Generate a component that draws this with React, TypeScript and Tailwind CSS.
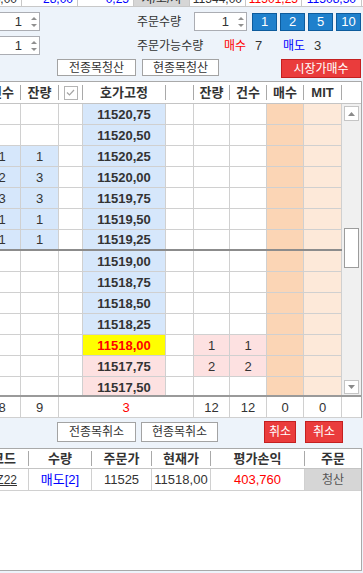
import React from "react";

type Row = {
  p: string;
  a?: string;
  b?: string;
  f?: string;
  g?: string;
  kind: "bid" | "cur" | "ask";
  thick?: boolean;
};

const rows: Row[] = [
  { p: "11520,75", kind: "bid" },
  { p: "11520,50", kind: "bid" },
  { p: "11520,25", a: "1", b: "1", kind: "bid" },
  { p: "11520,00", a: "2", b: "3", kind: "bid" },
  { p: "11519,75", a: "3", b: "3", kind: "bid" },
  { p: "11519,50", a: "1", b: "1", kind: "bid" },
  { p: "11519,25", a: "1", b: "1", kind: "bid", thick: true },
  { p: "11519,00", kind: "bid" },
  { p: "11518,75", kind: "bid" },
  { p: "11518,50", kind: "bid" },
  { p: "11518,25", kind: "bid" },
  { p: "11518,00", f: "1", g: "1", kind: "cur" },
  { p: "11517,75", f: "2", g: "2", kind: "ask" },
  { p: "11517,50", kind: "ask" },
];

function UpDown() {
  return (
    <div className="w-[11px] flex flex-col items-center justify-center gap-[4px]">
      <svg width="6" height="3" viewBox="0 0 6 3">
        <path d="M3 0L6 3H0z" fill="#909090" />
      </svg>
      <svg width="6" height="3" viewBox="0 0 6 3">
        <path d="M0 0H6L3 3z" fill="#909090" />
      </svg>
    </div>
  );
}

function Spin({ cls }: { cls: string }) {
  return (
    <div className={`${cls} shrink-0 h-[19px] bg-white border border-[#abadb3] flex items-center text-[13px]`}>
      <span className="flex-1 text-right pr-[6px] leading-none">1</span>
      <UpDown />
    </div>
  );
}

function H({ w, children }: { w: string; children?: React.ReactNode }) {
  return (
    <div className={`${w} shrink-0 h-full flex items-center`}>
      <div className="flex-1 flex justify-center font-bold text-[13px] leading-none">{children}</div>
      <div className="w-px h-[15px] bg-[#a9a9a9]" />
    </div>
  );
}

function C({ w, bg = "bg-white", children, cls = "" }: { w: string; bg?: string; children?: React.ReactNode; cls?: string }) {
  return (
    <div className={`${w} ${bg} ${cls} shrink-0 h-full border-r border-[#d0d0d0] flex items-center justify-center text-[13px] leading-none`}>
      {children}
    </div>
  );
}

function WhiteBtn({ cls, children }: { cls: string; children: React.ReactNode }) {
  return (
    <div className={`${cls} shrink-0 bg-white border border-[#a3a3a3] flex items-center justify-center text-[12px] leading-none text-[#333]`}>
      {children}
    </div>
  );
}

function RedBtn({ cls, children }: { cls: string; children: React.ReactNode }) {
  return (
    <div className={`${cls} shrink-0 bg-[#ea3c3c] border border-[#c42020] flex items-center justify-center text-[12px] leading-none text-white`}>
      {children}
    </div>
  );
}

export default function App() {
  return (
    <div className="w-[363px] h-[573px] overflow-hidden bg-[#edf3fa] text-[#333] font-['Liberation_Sans','Noto_Sans_CJK_KR',sans-serif]">
      {/* cut-off quote row */}
      <div className="flex h-[20px] -mt-[13px] -ml-[34px] bg-white border-b border-[#c8c8c8] text-[12px] leading-[14px]">
        <div className="w-[56px] shrink-0 border-r border-[#c8c8c8] flex items-end justify-end pr-[4px]">13,00</div>
        <div className="w-[56px] shrink-0 border-r border-[#c8c8c8] flex items-end justify-end pr-[4px] text-[#0000ff]">28,00</div>
        <div className="w-[56px] shrink-0 border-r border-[#c8c8c8] flex items-end justify-end pr-[4px] text-[#0000ff]">0,25</div>
        <div className="w-[56px] shrink-0 border-r border-[#c8c8c8] flex items-end justify-center bg-[#d6d6d6]">지/고/저</div>
        <div className="w-[56px] shrink-0 border-r border-[#c8c8c8] flex items-end justify-end pr-[3px]">11544,00</div>
        <div className="w-[56px] shrink-0 border-r border-[#c8c8c8] flex items-end justify-end pr-[3px] text-[#ff0000]">11501,25</div>
        <div className="w-[60px] shrink-0 border-r border-[#c8c8c8] flex items-end justify-end pr-[5px] text-[#0000ff]">11508,50</div>
      </div>

      {/* order qty */}
      <div className="flex items-center h-[21px] mt-[4px]">
        <Spin cls="w-[50px] -ml-[10px]" />
        <div className="ml-[97px] w-[57px] shrink-0 text-[12px] leading-none">주문수량</div>
        <Spin cls="w-[53px]" />
        <div className="ml-[5px] flex gap-[3px]">
          {["1", "2", "5", "10"].map((n) => (
            <div key={n} className="w-[25px] h-[18px] bg-[#1f80cc] border border-[#0d5b9c] flex items-center justify-center text-white text-[13px] leading-none">
              {n}
            </div>
          ))}
        </div>
      </div>

      {/* available qty */}
      <div className="flex items-center h-[21px] mt-[3px]">
        <Spin cls="w-[50px] -ml-[10px]" />
        <div className="ml-[97px] w-[87px] shrink-0 text-[12px] leading-none">주문가능수량</div>
        <div className="w-[31px] shrink-0 text-[12px] leading-none text-[#ff0000]">매수</div>
        <div className="w-[28px] shrink-0 text-[13px] leading-none">7</div>
        <div className="w-[31px] shrink-0 text-[12px] leading-none text-[#0000ff]">매도</div>
        <div className="text-[13px] leading-none">3</div>
      </div>

      {/* liquidation buttons */}
      <div className="flex items-start h-[19px] mt-[3px]">
        <WhiteBtn cls="ml-[57px] w-[79px] h-[17px]">전종목청산</WhiteBtn>
        <WhiteBtn cls="ml-[6px] w-[77px] h-[17px]">현종목청산</WhiteBtn>
        <RedBtn cls="ml-[62px] w-[80px] h-[19px]">시장가매수</RedBtn>
      </div>

      {/* order book grid */}
      <div className="mt-[3px] w-[362px] h-[337px] bg-white border-t border-r border-[#a9a9a9] overflow-hidden">
        <div className="-ml-[16px] w-[377px]">
          <div className="flex h-[22px] border-b border-[#c4c4c4]">
            <H w="w-[37px]">건수</H>
            <H w="w-[38px]">잔량</H>
            <H w="w-[24px]">
              <div className="w-[14px] h-[14px] border border-[#b4b4b4] bg-white flex items-center justify-center">
                <svg width="9" height="7" viewBox="0 0 9 7">
                  <path d="M1 3.5l2.5 2.5L8 1" fill="none" stroke="#a5a5a5" strokeWidth="1.2" />
                </svg>
              </div>
            </H>
            <H w="w-[83px]">호가고정</H>
            <H w="w-[28px]" />
            <H w="w-[36px]">잔량</H>
            <H w="w-[37px]">건수</H>
            <H w="w-[37px]">매수</H>
            <H w="w-[38px]">MIT</H>
          </div>

          <div className="flex h-[291px] overflow-hidden">
            <div className="w-[358px] shrink-0">
              {rows.map((r) => {
                const priceBg = r.kind === "bid" ? "bg-[#d6e7fb]" : r.kind === "cur" ? "bg-[#ffff00]" : "bg-[#fde1e1]";
                const leftBg = r.a ? "bg-[#d6e7fb]" : "bg-white";
                const rightBg = r.f ? "bg-[#fde1e1]" : "bg-white";
                return (
                  <div
                    key={r.p}
                    className={`flex h-[21px] ${r.thick ? "border-b-2 border-[#8c8c8c]" : "border-b border-[#d0d0d0]"}`}
                  >
                    <C w="w-[37px]" bg={leftBg}>{r.a}</C>
                    <C w="w-[38px]" bg={leftBg}>{r.b}</C>
                    <C w="w-[24px]" />
                    <C
                      w="w-[83px]"
                      bg={priceBg}
                      cls={`font-bold text-[12.5px] ${r.kind === "cur" ? "text-[#ff0000]" : "text-[#333]"}`}
                    >
                      {r.p}
                    </C>
                    <C w="w-[28px]" />
                    <C w="w-[36px]" bg={rightBg}>{r.f}</C>
                    <C w="w-[37px]" bg={rightBg}>{r.g}</C>
                    <C w="w-[37px]" bg="bg-[#fbd5b5]" />
                    <C w="w-[38px]" bg="bg-[#fde9d9]" />
                  </div>
                );
              })}
            </div>
            {/* scrollbar */}
            <div className="w-[19px] shrink-0 bg-[#f0f0f0] flex flex-col items-center">
              <div className="mt-[2px] w-[15px] h-[15px] bg-white border border-[#c5c5c5] flex items-center justify-center">
                <svg width="7" height="4" viewBox="0 0 7 4">
                  <path d="M3.5 0L7 4H0z" fill="#8a8a8a" />
                </svg>
              </div>
              <div className="mt-[107px] w-[15px] h-[40px] bg-white border border-[#9c9c9c]" />
              <div className="mt-[112px] w-[15px] h-[14px] bg-white border border-[#c5c5c5] flex items-center justify-center">
                <svg width="7" height="4" viewBox="0 0 7 4">
                  <path d="M0 0H7L3.5 4z" fill="#8a8a8a" />
                </svg>
              </div>
            </div>
          </div>

          <div className="h-[2px] bg-[#9a9a9a]" />
          <div className="flex h-[21px] border-b border-[#d0d0d0]">
            <C w="w-[37px]">8</C>
            <C w="w-[38px]">9</C>
            <C w="w-[135px]" cls="text-[#ff0000]">3</C>
            <C w="w-[36px]">12</C>
            <C w="w-[37px]">12</C>
            <C w="w-[37px]">0</C>
            <C w="w-[38px]">0</C>
          </div>
        </div>
      </div>

      {/* cancel buttons */}
      <div className="flex items-center h-[22px] mt-[3px]">
        <WhiteBtn cls="ml-[57px] w-[79px] h-[20px]">전종목취소</WhiteBtn>
        <WhiteBtn cls="ml-[5px] w-[77px] h-[20px]">현종목취소</WhiteBtn>
        <RedBtn cls="ml-[46px] w-[32px] h-[22px]">취소</RedBtn>
        <RedBtn cls="ml-[9px] w-[38px] h-[22px]">취소</RedBtn>
      </div>

      {/* open positions */}
      <div className="mt-[5px] w-[362px] h-[123px] bg-white border-t border-r border-b border-[#a9a9a9] overflow-hidden">
        <div className="-ml-[20px] w-[381px]">
          <div className="flex h-[20px] border-b border-[#c4c4c4]">
            <H w="w-[49px]">코드</H>
            <H w="w-[63px]">수량</H>
            <H w="w-[60px]">주문가</H>
            <H w="w-[59px]">현재가</H>
            <H w="w-[94px]">평가손익</H>
            <div className="w-[56px] shrink-0 h-full flex items-center justify-center font-bold text-[13px] leading-none">주문</div>
          </div>
          <div className="flex h-[22px] border-b border-[#d0d0d0] text-[12px]">
            <C w="w-[49px]" cls="justify-end pr-[11px] overflow-hidden">
              <span className="underline whitespace-nowrap text-[12px]">NQZ22</span>
            </C>
            <C w="w-[63px]" cls="text-[#0000ff] text-[12px]">매도[2]</C>
            <C w="w-[60px]" cls="text-[12px]">11525</C>
            <C w="w-[59px]" cls="text-[12px]">11518,00</C>
            <C w="w-[94px]" cls="text-[#ff0000] text-[12px]">403,760</C>
            <div className="w-[56px] shrink-0 h-full bg-[#d6d6d6] flex items-center justify-center text-[12px] leading-none text-[#555]">청산</div>
          </div>
        </div>
      </div>
    </div>
  );
}
